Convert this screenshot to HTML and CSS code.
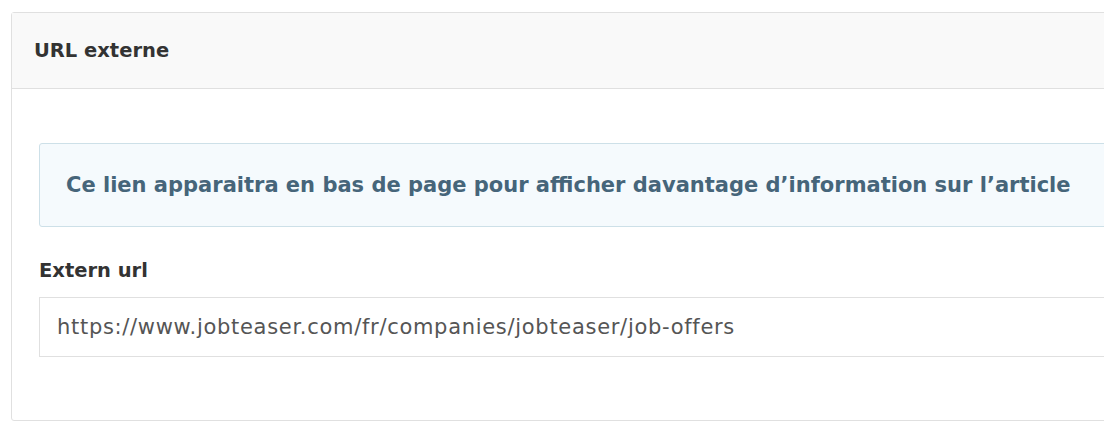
FILE: index.html
```html
<!DOCTYPE html>
<html lang="fr">
<head>
<meta charset="utf-8">
<link rel="stylesheet" href="styles.css">
</head>
<body>
<div class="card">
  <div class="card-header"><h2 class="card-title">URL externe</h2></div>
  <div class="card-body">
    <div class="alert">Ce lien apparaitra en bas de page pour afficher davantage d’information sur l’article</div>
    <label class="label" for="url">Extern url</label>
    <input class="input" id="url" type="text" value="https://www.jobteaser.com/fr/companies/jobteaser/job-offers">
  </div>
</div>
</body>
</html>
```
FILE: styles.css
```css
html, body { margin: 0; padding: 0; background: #fff; overflow: hidden; }
body { padding: 12px 0 0 11px; font-family: "DejaVu Sans", sans-serif; }
.card {
  width: 1140px;
  height: 409px;
  box-sizing: border-box;
  border: 1px solid #e0e0e0;
  border-radius: 3px;
  display: flex;
  flex-direction: column;
}
.card-header {
  height: 75px;
  background: #f9f9f9;
  border-bottom: 1px solid #e0e0e0;
  display: flex;
  align-items: center;
  padding-left: 22px;
}
.card-title { margin: 0; font-size: 19.5px; font-weight: 700; color: #333; }
.card-body { padding: 54px 0 0 27px; display: flex; flex-direction: column; }
.alert {
  height: 84px;
  box-sizing: border-box;
  background: #f5fafd;
  border: 1px solid #cde0e8;
  border-radius: 3px;
  display: flex;
  align-items: center;
  padding-left: 26px;
  font-size: 21px;
  font-weight: 700;
  color: #46657a;
}
.label { margin-top: 31px; font-size: 19.5px; font-weight: 700; color: #333; line-height: 26px; }
.input {
  margin-top: 13px;
  height: 60px;
  box-sizing: border-box;
  border: 1px solid #e0e0e0;
  padding: 0 17px;
  font-family: inherit;
  font-size: 21px;
  letter-spacing: 0.7px;
  color: #555;
  outline: none;
}
```
